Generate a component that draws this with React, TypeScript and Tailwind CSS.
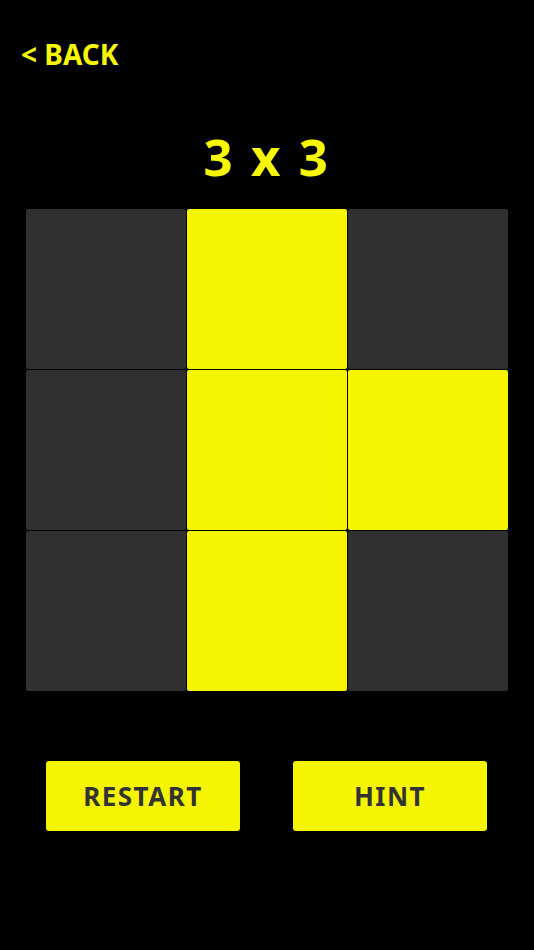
import React, { useState } from "react";

const initial = [
  false, true, false,
  false, true, true,
  false, true, false,
];

export default function App() {
  const [cells, setCells] = useState<boolean[]>(initial);

  function toggle(i: number) {
    setCells(cells.map((c, j) => (j === i ? !c : c)));
  }

  return (
    <div
      className="w-[534px] h-[950px] bg-black flex flex-col"
      style={{ fontFamily: '"Noto Sans", "DejaVu Sans", sans-serif' }}
    >
      <div className="pt-[40px] pl-[21px]">
        <button className="text-[28px] leading-[28px] font-bold text-[#f7f700]">
          &lt; BACK
        </button>
      </div>

      <h1 className="mt-[60px] text-center text-[51px] leading-[50px] font-bold text-[#f7f700] tracking-[2.5px]">
        3 x 3
      </h1>

      <div className="mt-[28px] mx-[26px] grid grid-cols-3 gap-px">
        {cells.map((on, i) => (
          <button
            key={i}
            onClick={() => toggle(i)}
            className={
              on
                ? "h-[160px] rounded-[2px] bg-[#f5f500]"
                : "h-[160px] rounded-[2px] bg-[#303030]"
            }
          />
        ))}
      </div>

      <div className="mt-[70px] flex justify-between pl-[46px] pr-[47px]">
        <button className="w-[194px] h-[70px] rounded-[3px] bg-[#f5f500] text-[#333333] text-[26px] font-bold tracking-[1.5px]">
          RESTART
        </button>
        <button className="w-[194px] h-[70px] rounded-[3px] bg-[#f5f500] text-[#333333] text-[26px] font-bold tracking-[1.5px]">
          HINT
        </button>
      </div>
    </div>
  );
}
